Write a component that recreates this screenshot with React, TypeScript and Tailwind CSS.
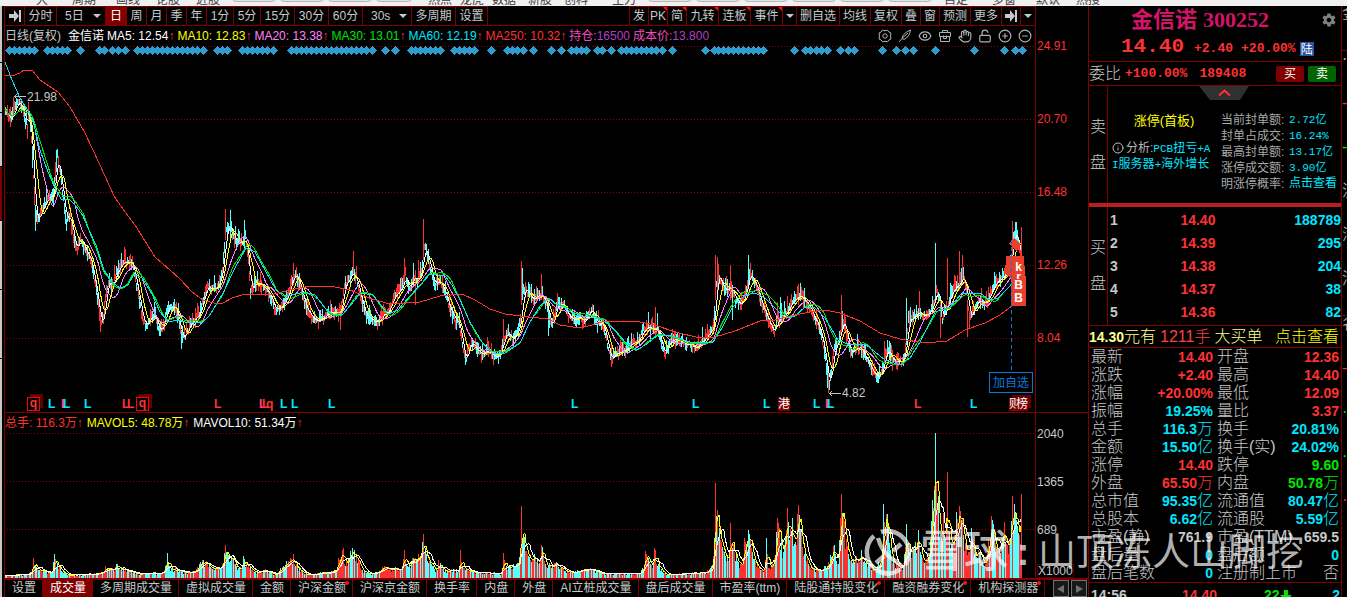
// Libraries
import type { ReactNode } from "react";
import clsx from "clsx";
import { CircleMinus, CirclePlus, Eye, Hand, Info, LockOpen } from "lucide-react";
import { IoMdSettings } from "react-icons/io";

type Point = [number, number];

interface ToolItem {
  label: ReactNode;
  width: string;
  active?: boolean;
  hot?: boolean;
}

interface Marker {
  text: string;
  x: number;
  tone: string;
}

interface StatCell {
  label: string;
  value: string;
  unit?: string;
  tone: string;
}

// Plot geometry, shared by both charts
const PLOT_LEFT = 5;
const PLOT_WIDTH = 1030;
const FIRST_BAR = 5;
const LAST_BAR = 1021;
const VOLUME_BASE = 578;

const RED = "text-[#ff3232]";
const CYAN = "text-[#00e6ff]";
const GREEN = "text-[#00e600]";
const GRAY = "text-[#c8c8c8]";

const CLOSES: Point[] = [
  [5, 110], [10, 121], [15, 109], [18, 102], [22, 108], [26, 124], [29, 115], [31, 140], [33, 178],
  [35, 220], [38, 220], [42, 208], [46, 202], [50, 195], [53, 197], [55, 172], [57, 157], [60, 174],
  [62, 192], [66, 222], [70, 215], [73, 240], [77, 250], [80, 238], [84, 247], [88, 255], [91, 262],
  [94, 280], [98, 305], [100, 322], [103, 318], [106, 290], [109, 280], [112, 288], [116, 272],
  [120, 268], [124, 262], [132, 263], [136, 285], [140, 305], [143, 322], [147, 325], [151, 317],
  [155, 315], [159, 332], [163, 325], [167, 308], [175, 308], [178, 318], [181, 338], [185, 335],
  [190, 325], [195, 317], [199, 315], [203, 300], [207, 285], [211, 290], [216, 288], [220, 280],
  [223, 262], [225, 235], [228, 226], [231, 230], [234, 240], [238, 243], [242, 245], [245, 237],
  [248, 262], [250, 290], [255, 285], [260, 283], [265, 288], [270, 295], [275, 310], [280, 307],
  [285, 300], [288, 295], [292, 278], [296, 275], [300, 287], [304, 303], [308, 312], [312, 317],
  [318, 322], [324, 317], [330, 313], [340, 312], [344, 287], [348, 280], [352, 272], [356, 278],
  [360, 298], [364, 312], [368, 318], [373, 320], [378, 322], [382, 315], [388, 313], [392, 300],
  [395, 294], [398, 293], [402, 287], [405, 276], [409, 290], [413, 279], [418, 279], [421, 272],
  [424, 246], [427, 253], [430, 270], [434, 285], [438, 280], [442, 285], [446, 298], [450, 310],
  [455, 320], [459, 325], [462, 345], [465, 362], [468, 348], [472, 342], [478, 352], [484, 354],
  [488, 350], [494, 357], [500, 355], [503, 340], [507, 332], [512, 340], [518, 330], [521, 315],
  [523, 288], [527, 292], [532, 300], [537, 296], [542, 294], [546, 305], [549, 320], [552, 325],
  [556, 306], [560, 303], [564, 305], [568, 317], [574, 320], [580, 315], [583, 325], [587, 315],
  [592, 310], [597, 325], [602, 322], [606, 340], [611, 360], [615, 353], [625, 350], [632, 343],
  [638, 341], [643, 331], [648, 326], [653, 331], [657, 329], [661, 345], [665, 353], [670, 342],
  [676, 338], [682, 343], [690, 345], [695, 347], [702, 342], [708, 333], [713, 328], [715, 300],
  [717, 274], [720, 280], [725, 290], [730, 286], [735, 300], [740, 305], [745, 295], [748, 280],
  [750, 273], [755, 285], [760, 300], [765, 315], [770, 325], [774, 332], [777, 318], [782, 318],
  [787, 312], [792, 300], [797, 298], [800, 295], [804, 300], [808, 305], [812, 315], [816, 322],
  [820, 333], [824, 350], [827, 375], [829, 385], [831, 370], [834, 348], [838, 342], [841, 326],
  [844, 322], [847, 340], [850, 354], [855, 350], [860, 348], [866, 358], [872, 372], [878, 377],
  [882, 372], [884, 358], [888, 350], [893, 362], [903, 361], [906, 340], [908, 320], [913, 318],
  [918, 311], [924, 316], [930, 312], [934, 300], [936, 290], [939, 300], [942, 320], [946, 310],
  [950, 295], [955, 287], [960, 281], [963, 276], [966, 290], [969, 318], [973, 312], [978, 300],
  [983, 305], [988, 300], [993, 287], [998, 280], [1003, 277], [1008, 272], [1011, 260], [1013, 235],
  [1016, 235], [1019, 250], [1021, 258],
];

// x, high, low, rising
const WICKS: [number, number, number, boolean][] = [
  [13, 97, 115, true], [28, 102, 120, true], [27, 124, 139, true], [56, 150, 172, false], [35, 205, 231, false],
  [100, 312, 332, true], [181, 330, 349, false], [225, 209, 240, true], [230, 210, 240, false],
  [244, 220, 248, false], [293, 263, 285, true], [340, 305, 330, true], [353, 251, 275, true],
  [404, 258, 282, true], [413, 263, 285, false], [415, 270, 305, true], [418, 260, 284, true],
  [423, 219, 260, true], [465, 350, 365, false], [503, 319, 345, true], [521, 261, 305, true],
  [522, 268, 300, false], [541, 274, 300, true], [548, 300, 336, false], [557, 293, 312, true],
  [611, 345, 367, true], [655, 307, 336, true], [715, 255, 300, true], [717, 257, 290, true],
  [730, 265, 300, true], [732, 285, 320, false], [748, 255, 285, false], [780, 297, 322, false],
  [798, 284, 305, true], [827, 360, 388, false], [828, 370, 393, true], [841, 295, 335, true],
  [884, 341, 362, true], [906, 298, 345, false], [919, 291, 315, true], [935, 243, 300, false],
  [940, 300, 338, true], [947, 258, 300, true], [959, 251, 290, true], [962, 255, 285, true],
  [967, 300, 337, true], [1012, 221, 260, true], [1015, 222, 245, false], [1016, 222, 252, false],
  [1021, 227, 262, true],
];

const MA60: Point[] = [
  [5, 62], [12, 80], [20, 98], [30, 114], [34, 125], [40, 150], [48, 172], [55, 188], [61, 199],
  [69, 199], [76, 206], [83, 216], [88, 228], [96, 245], [104, 270], [112, 282], [120, 288],
  [128, 285], [134, 274], [142, 278], [152, 294], [160, 312], [168, 322], [178, 320], [185, 322],
  [203, 322], [210, 315], [222, 295], [235, 268], [246, 248], [255, 252], [265, 270], [276, 290],
  [286, 296], [305, 292], [315, 295], [325, 308], [333, 315], [343, 314], [355, 300], [360, 293],
  [373, 295], [388, 314], [398, 310], [410, 296], [422, 283], [430, 274], [445, 276], [452, 285],
  [460, 300], [470, 322], [482, 342], [492, 353], [505, 353], [520, 343], [530, 322], [540, 306],
  [549, 298], [556, 304], [565, 308], [575, 315], [590, 317], [603, 320], [615, 330], [625, 342],
  [637, 350], [648, 343], [658, 335], [672, 336], [690, 342], [705, 343], [713, 342], [722, 328],
  [732, 308], [745, 295], [755, 293], [765, 298], [775, 308], [785, 318], [795, 316], [805, 307],
  [815, 308], [825, 318], [838, 340], [850, 345], [865, 344], [875, 352], [885, 360], [900, 365],
  [910, 358], [920, 342], [935, 312], [950, 307], [962, 293], [980, 293], [990, 300], [998, 298],
  [1011, 285],
];

const MA250: Point[] = [
  [5, 75], [12, 76], [20, 73], [24, 70], [32, 70], [40, 80], [58, 92], [70, 107], [85, 133],
  [100, 165], [114, 196], [125, 212], [135, 225], [155, 257], [170, 270], [180, 279], [192, 292],
  [203, 300], [214, 303], [223, 303], [232, 298], [245, 294], [270, 295], [290, 290], [310, 286],
  [330, 286], [350, 290], [372, 299], [390, 304], [420, 302], [440, 296], [462, 294], [475, 300],
  [490, 309], [505, 314], [520, 316], [548, 319], [560, 325], [580, 328], [592, 325], [605, 321],
  [640, 322], [655, 325], [675, 332], [700, 338], [715, 337], [735, 331], [760, 321], [775, 320],
  [790, 316], [810, 312], [825, 310], [840, 313], [860, 321], [880, 333], [900, 339], [925, 343],
  [947, 341], [965, 330], [985, 323], [1000, 315], [1012, 306],
];

const VOLUMES: Point[] = [
  [5, 3], [25, 4], [32, 7], [33, 20], [35, 12], [40, 8], [52, 5], [54, 24], [57, 15], [62, 6], [70, 3],
  [100, 5], [105, 12], [115, 11], [116, 14], [125, 9], [140, 4], [163, 6], [165, 12], [167, 25],
  [169, 12], [185, 6], [195, 7], [202, 18], [207, 16], [215, 10], [222, 14], [225, 33], [227, 24],
  [232, 20], [238, 10], [242, 12], [243, 22], [248, 12], [255, 6], [265, 9], [275, 4], [283, 12],
  [290, 20], [293, 24], [297, 11], [305, 4], [325, 6], [336, 8], [338, 20], [343, 30], [344, 14], [348, 20],
  [352, 30], [356, 24], [362, 8], [372, 4], [384, 12], [392, 9], [402, 12], [404, 28], [407, 12], [413, 20],
  [418, 24], [421, 22], [423, 44], [426, 24], [432, 12], [437, 8], [438, 18], [445, 8], [459, 9],
  [460, 28], [463, 10], [480, 6], [501, 5], [503, 25], [506, 12], [518, 14], [520, 26], [521, 72],
  [523, 44], [528, 22], [533, 18], [534, 24], [540, 18], [541, 33], [545, 14], [556, 16], [565, 7],
  [590, 10], [600, 5], [640, 5], [644, 14], [645, 27], [650, 14], [653, 14], [654, 30], [658, 14], [665, 4],
  [704, 6], [710, 10], [713, 22], [714, 40], [715, 95], [717, 68], [720, 38], [724, 26], [729, 24],
  [730, 55], [733, 34], [738, 16], [743, 16], [744, 40], [748, 48], [752, 26], [757, 13], [764, 8],
  [766, 40], [768, 10], [774, 20], [777, 60], [779, 50], [783, 26], [787, 70], [789, 38], [792, 60],
  [795, 36], [798, 73], [800, 48], [805, 26], [810, 10], [822, 8], [828, 16], [834, 33], [838, 14],
  [840, 60], [841, 84], [843, 60], [848, 24], [855, 20], [861, 28], [866, 16], [875, 9], [882, 22],
  [883, 74], [884, 56], [887, 64], [890, 28], [896, 14], [903, 12], [906, 54], [908, 30], [913, 30],
  [918, 48], [922, 20], [929, 18], [932, 78], [933, 70], [934, 92], [935, 145], [936, 96], [938, 82], [941, 40],
  [943, 65], [946, 48], [947, 106], [949, 46], [953, 36], [956, 66], [959, 72], [962, 60], [965, 35], [969, 26],
  [971, 50], [974, 24], [980, 28], [985, 14], [991, 62], [993, 54], [997, 30], [1004, 56], [1006, 34],
  [1010, 40], [1012, 82], [1014, 74], [1017, 52], [1020, 34], [1021, 84],
];

// Signal diamonds above the candles, as runs of centres
const SIGNAL_RUNS: Point[] = [
  [9, 34], [47, 67], [80, 80], [99, 104], [112, 118], [125, 125], [137, 203], [217, 227], [242, 273],
  [291, 372], [385, 385], [395, 395], [411, 440], [454, 474], [491, 491], [507, 523], [533, 533],
  [551, 551], [561, 561], [571, 586], [597, 602], [611, 611], [621, 626], [631, 662], [672, 672],
  [705, 705], [714, 763], [794, 794], [805, 827], [840, 840], [848, 848], [854, 854], [882, 882],
  [896, 896], [905, 905], [913, 913], [935, 935], [974, 974], [1004, 1004], [1015, 1015], [1022, 1022],
];

function seeded(seed: number) {
  let s = seed;
  return () => {
    s = (s * 16807) % 2147483647;
    return s / 2147483647;
  };
}

function interpolate(points: Point[], x: number) {
  const next = points.findIndex((p) => p[0] >= x);
  if (next <= 0) return points[0][1];
  const [x0, y0] = points[next - 1];
  const [x1, y1] = points[next];
  return y0 + ((y1 - y0) * (x - x0)) / (x1 - x0);
}

function average(values: number[], size: number) {
  return values.map((_, i) => {
    const part = values.slice(Math.max(0, i - size + 1), i + 1);
    return part.reduce((a, b) => a + b, 0) / part.length;
  });
}

function toLine(values: number[]) {
  return values.map((v, i) => `${FIRST_BAR + i},${v.toFixed(1)}`).join(" ");
}

function buildCharts() {
  const random = seeded(300252);
  const closes: number[] = [];
  const volumes: number[] = [];
  const candles = { up: "", down: "" };
  const bars = { up: "", down: "" };

  for (let x = FIRST_BAR; x <= LAST_BAR; x++) {
    const close = interpolate(CLOSES, x) + (random() - 0.5) * 4;
    const wick = WICKS.find((w) => w[0] === x);
    const key = (wick ? wick[3] : random() > 0.5) ? "up" : "down";
    const high = wick ? wick[1] : close - 2 - random() * random() * 14;
    const low = wick ? wick[2] : close + 2 + random() * random() * 9;
    candles[key] += `M${x + 0.5} ${high.toFixed(0)}V${low.toFixed(0)}`;
    closes.push(close);

    const exact = VOLUMES.some((v) => v[0] === x);
    const volume = interpolate(VOLUMES, x) * (exact ? 1 : 0.6 + random() * 0.5);
    bars[key] += `M${x + 0.5} ${VOLUME_BASE}V${(VOLUME_BASE - volume).toFixed(0)}`;
    volumes.push(volume);
  }

  return {
    candles,
    bars,
    ma: [5, 10, 20, 30].map((n) => toLine(average(closes, n))),
    mavol: [5, 10].map((n) => toLine(average(volumes, n).map((v) => VOLUME_BASE - v))),
  };
}

const charts = buildCharts();

const LEFT_TOOLS: ToolItem[] = [
  { label: <ArrowToBar />, width: "w-5" },
  { label: "分时", width: "w-8" },
  { label: <>5日<Caret /></>, width: "w-[49px]" },
  { label: "日", width: "w-[21px]", active: true },
  { label: "周", width: "w-5" },
  { label: "月", width: "w-5" },
  { label: "季", width: "w-5" },
  { label: "年", width: "w-5" },
  { label: "1分", width: "w-[27px]" },
  { label: "5分", width: "w-[27px]" },
  { label: "15分", width: "w-[34px]" },
  { label: "30分", width: "w-[34px]" },
  { label: "60分", width: "w-[34px]" },
  { label: <>30s<Caret /></>, width: "w-[49px]" },
  { label: "多周期", width: "w-11" },
  { label: "设置", width: "w-8" },
];

const RIGHT_TOOLS: ToolItem[] = [
  { label: "发", width: "w-[19px]" },
  { label: "PK", width: "w-[19px]", hot: true },
  { label: "简", width: "w-[19px]", hot: true },
  { label: "九转", width: "w-8", hot: true },
  { label: "连板", width: "w-8", hot: true },
  { label: "事件", width: "w-8", hot: true },
  { label: <Caret />, width: "w-[14px]" },
  { label: "删自选", width: "w-[43px]" },
  { label: "均线", width: "w-[31px]" },
  { label: "复权", width: "w-[31px]" },
  { label: "叠", width: "w-[19px]" },
  { label: "窗", width: "w-[19px]" },
  { label: "预测", width: "w-[31px]" },
  { label: "更多", width: "w-[31px]" },
  { label: <ArrowToBar />, width: "w-[19px]" },
  { label: <Caret />, width: "w-[15px]" },
];

const AVERAGES = [
  { text: "MA5: 12.54", tone: "text-white" },
  { text: "MA10: 12.83", tone: "text-[#ffff00]" },
  { text: "MA20: 13.38", tone: "text-[#ff80ff]" },
  { text: "MA30: 13.01", tone: GREEN },
  { text: "MA60: 12.19", tone: CYAN },
  { text: "MA250: 10.32", tone: RED },
];

const MARKERS: Marker[] = [
  { text: "L", x: 48, tone: CYAN },
  { text: "L", x: 61, tone: "text-[#ff4080]" },
  { text: "L", x: 63, tone: CYAN },
  { text: "L", x: 84, tone: CYAN },
  { text: "L", x: 122, tone: RED },
  { text: "L", x: 127, tone: RED },
  { text: "L", x: 214, tone: RED },
  { text: "L", x: 259, tone: "text-[#ff4080]" },
  { text: "L", x: 262, tone: RED },
  { text: "q", x: 266, tone: RED },
  { text: "L", x: 280, tone: CYAN },
  { text: "L", x: 291, tone: CYAN },
  { text: "L", x: 328, tone: CYAN },
  { text: "L", x: 571, tone: CYAN },
  { text: "L", x: 692, tone: CYAN },
  { text: "L", x: 763, tone: CYAN },
  { text: "L", x: 813, tone: CYAN },
  { text: "L", x: 825, tone: "text-[#ff4080]" },
  { text: "L", x: 827, tone: CYAN },
  { text: "L", x: 914, tone: RED },
  { text: "L", x: 970, tone: CYAN },
];

const TABS = [
  { label: "设置" },
  { label: "成交量", active: true },
  { label: "多周期成交量" },
  { label: "虚拟成交量" },
  { label: "金额" },
  { label: "沪深金额", dot: true },
  { label: "沪深京金额" },
  { label: "换手率" },
  { label: "内盘" },
  { label: "外盘" },
  { label: "AI立桩成交量" },
  { label: "盘后成交量" },
  { label: "市盈率(ttm)" },
  { label: "陆股通持股变化", dot: true },
  { label: "融资融券变化", dot: true },
  { label: "机构探测器", dot: true },
];

const LIMIT_FACTS = [
  ["当前封单额", "2.72亿"],
  ["封单占成交", "16.24%"],
  ["最高封单额", "13.17亿"],
  ["涨停成交额", "3.90亿"],
  ["明涨停概率", "点击查看"],
];

const BIDS = [
  ["1", "14.40", "188789"],
  ["2", "14.39", "295"],
  ["3", "14.38", "204"],
  ["4", "14.37", "38"],
  ["5", "14.36", "82"],
];

const STATS: [StatCell, StatCell][] = [
  [{ label: "最新", value: "14.40", tone: RED }, { label: "开盘", value: "12.36", tone: RED }],
  [{ label: "涨跌", value: "+2.40", tone: RED }, { label: "最高", value: "14.40", tone: RED }],
  [{ label: "涨幅", value: "+20.00%", tone: RED }, { label: "最低", value: "12.09", tone: RED }],
  [{ label: "振幅", value: "19.25%", tone: CYAN }, { label: "量比", value: "3.37", tone: RED }],
  [{ label: "总手", value: "116.3", unit: "万", tone: CYAN }, { label: "换手", value: "20.81%", tone: CYAN }],
  [{ label: "金额", value: "15.50", unit: "亿", tone: CYAN }, { label: "换手(实)", value: "24.02%", tone: CYAN }],
  [{ label: "涨停", value: "14.40", tone: RED }, { label: "跌停", value: "9.60", tone: GREEN }],
  [{ label: "外盘", value: "65.50", unit: "万", tone: RED }, { label: "内盘", value: "50.78", unit: "万", tone: GREEN }],
  [{ label: "总市值", value: "95.35", unit: "亿", tone: CYAN }, { label: "流通值", value: "80.47", unit: "亿", tone: CYAN }],
  [{ label: "总股本", value: "6.62", unit: "亿", tone: CYAN }, { label: "流通股", value: "5.59", unit: "亿", tone: CYAN }],
  [{ label: "市盈(静)", value: "761.9", tone: GRAY }, { label: "市盈(TTM)", value: "659.5", tone: GRAY }],
  [{ label: "盘后量", value: "0", tone: CYAN }, { label: "盘后额", value: "0", tone: CYAN }],
  [{ label: "盘后笔数", value: "0", tone: CYAN }, { label: "注册制上市", value: "", unit: "否", tone: GRAY }],
];

// Bottom edge of the window's ribbon menu
const RIBBON: { text?: string; box: string }[] = [
  { text: "大", box: "ml-9 w-9" },
  { text: "周期", box: "w-11" },
  { text: "画线", box: "w-10" },
  { text: "论股", box: "w-10" },
  { text: "近股", box: "w-9" },
  { box: "w-11" },
  { box: "ml-1 w-11" },
  { box: "ml-1 w-11" },
  { box: "ml-1 w-9" },
  { text: "热点", box: "ml-4 w-8" },
  { text: "龙虎", box: "w-8" },
  { text: "数据", box: "w-9" },
  { text: "新股", box: "w-9" },
  { text: "创科", box: "w-12" },
  { text: "主力", box: "w-9" },
  { box: "w-11" },
  { box: "ml-1 w-11" },
  { box: "ml-1 w-11" },
  { box: "ml-1 w-11" },
  { box: "ml-1 w-11" },
  { box: "ml-1 w-11" },
  { text: "自定", box: "ml-3 w-12" },
  { text: "多窗", box: "w-11" },
  { text: "默认", box: "w-10" },
  { text: "热搜", box: "w-10" },
];

function toPercent(x: number) {
  return `${((x - PLOT_LEFT) / PLOT_WIDTH) * 100}%`;
}

function Caret() {
  return (
    <svg className="h-1 w-2 shrink-0" viewBox="0 0 8 4" fill="#c8c8c8">
      <path d="M0 0h8L4 4z" />
    </svg>
  );
}

function ArrowToBar() {
  return (
    <svg className="h-3 w-3 shrink-0" viewBox="0 0 12 12" fill="#c8c8c8">
      <path d="M0 4h5V0l5 6-5 6V8H0zM10 0h2v12h-2z" />
    </svg>
  );
}

function ToolButton({ label, width, active, hot }: ToolItem) {
  return (
    <button
      className={clsx(
        "relative flex h-full shrink-0 items-center border-r border-[#800000] whitespace-nowrap",
        width,
        width === "w-[49px]" ? "justify-between pr-1 pl-2" : "justify-center",
        active ? "bg-[#800000] text-white" : GRAY,
      )}
    >
      {label}
      {hot && (
        <svg className="absolute top-0 right-0 h-1 w-1" viewBox="0 0 4 4" fill="#ff1010">
          <path d="M0 0h4v4z" />
        </svg>
      )}
    </button>
  );
}

function Ribbon() {
  return (
    <div className="flex h-[6px] shrink-0 items-end overflow-hidden bg-[#f0f0f0] text-xs leading-3 text-[#404040]">
      {RIBBON.map((item, i) => (
        <span
          key={i}
          className={clsx(
            "shrink-0",
            item.box,
            !item.text && "mb-1 h-3 rounded-sm border border-[#b8b8b8] bg-[#e4e4e4]",
          )}
        >
          {item.text}
        </span>
      ))}
    </div>
  );
}

function Toolbar() {
  return (
    <div className="flex h-5 shrink-0 justify-between border-b border-[#800000] text-xs">
      <div className="flex border-t border-[#800000]">
        {LEFT_TOOLS.map((item, i) => <ToolButton key={i} {...item} />)}
      </div>
      <div className="flex border-t border-l border-[#800000]">
        {RIGHT_TOOLS.map((item, i) => <ToolButton key={i} {...item} />)}
      </div>
    </div>
  );
}

function ChartTools() {
  const icon = "h-[14px] w-[14px]";

  return (
    <div className="ml-auto flex items-center gap-[6px] pr-[3px] text-[#b0b0b0]">
      <button aria-label="设置">
        <svg className={icon} viewBox="0 0 14 14" fill="none" stroke="currentColor">
          <path d="M4.5 1.2Q7 2.2 9.500 1.200Q10.500 3.500 13 4Q12 7 13 10Q10.500 10.500 9.500 12.800Q7 11.800 4.500 12.800Q3.500 10.500 1 10Q2 7 1 4Q3.500 3.500 4.500 1.200Z" />
          <circle cx="7" cy="7" r="2.200" />
        </svg>
      </button>
      <button aria-label="画线">
        <svg className={icon} viewBox="0 0 14 14" fill="none" stroke="currentColor">
          <path d="M1 13L4 9.500M4 9.500Q5 4 12.500 1Q11.500 8 6 10.500L4 9.500L10 4" />
        </svg>
      </button>
      <button aria-label="显示"><Eye className={icon} strokeWidth={2} /></button>
      <button aria-label="工具箱">
        <svg className={icon} viewBox="0 0 14 14" fill="none" stroke="currentColor">
          <path d="M4.500 3.500V1.500H9.500V3.500M1.500 3.500H12.500V7.500H1.500zM2.500 7.500V12.500H11.500V7.500M5.500 6.500V9.500H8.500V6.500" />
        </svg>
      </button>
      <button aria-label="拖动"><Hand className={icon} strokeWidth={2} /></button>
      <button aria-label="解锁"><LockOpen className={icon} strokeWidth={2} /></button>
      <button aria-label="放大"><CirclePlus className={icon} strokeWidth={2} /></button>
      <button aria-label="缩小"><CircleMinus className={icon} strokeWidth={2} /></button>
    </div>
  );
}

function GridLines({ rows }: { rows: number[] }) {
  return (
    <g stroke="#900000" strokeDasharray="1 2">
      {rows.map((y) => <path key={y} d={`M7 ${y + 0.5}H1035`} />)}
    </g>
  );
}

function PriceChart() {
  const signals = SIGNAL_RUNS.flatMap(([from, to]) => {
    const count = Math.round((to - from) / 5);
    return Array.from({ length: count + 1 }, (_, i) => from + (count ? ((to - from) / count) * i : 0));
  });

  return (
    <div className="relative h-[366px]">
      <svg
        className="block h-full w-full"
        viewBox="5 46 1030 366"
        preserveAspectRatio="none"
        fill="none"
        shapeRendering="crispEdges"
      >
        <GridLines rows={[46, 119, 192, 265, 338]} />
        <path fill="#2e9ccc" d={signals.map((x) => `M${x - 4.5} 50.500l4.500 -4.500l4.500 4.500l-4.500 4.500z`).join("")} />
        <path stroke="#ff3232" d={charts.candles.up} />
        <path stroke="#54ffff" d={charts.candles.down} />
        <polyline stroke="#fff" points={charts.ma[0]} />
        <polyline stroke="#ff0" points={charts.ma[1]} />
        <polyline stroke="#ff80ff" points={charts.ma[2]} />
        <polyline stroke="#00e600" points={charts.ma[3]} />
        <polyline stroke="#00e6ff" points={MA60.join(" ")} />
        <polyline stroke="#ff3232" points={MA250.join(" ")} />
        <path stroke="#c0c0c0" d="M14 96.500H26M14 96.500l3 -2M14 96.500l3 2M829 393.500H841M829 393.500l3 -2M829 393.500l3 2" />
        <path fill="#e8402a" d="M1009 243l5 -5l6 6v5l-4 2zM1006 256h18l1 20h1v30h-15v-28l-6 -4z" />
        <path stroke="#0b78d8" strokeDasharray="4 3" d="M1011.500 240V372" />
      </svg>

      <span className={clsx("absolute top-[43px] text-xs leading-4", GRAY)} style={{ left: toPercent(27) }}>21.98</span>
      <span className={clsx("absolute top-[339px] text-xs leading-4", GRAY)} style={{ left: toPercent(842) }}>4.82</span>

      <div
        className="absolute top-[215px] w-[15px] text-center text-xs leading-[13px] font-bold text-white"
        style={{ left: toPercent(1011) }}
      >
        <div className="h-[10px] overflow-hidden">k</div>
        <div className="mt-[2px] h-[6px] overflow-hidden leading-[9px]">r</div>
        <div>B</div>
        <div>B</div>
      </div>

      <button className="absolute top-[326px] right-[2px] h-[21px] border border-[#0b78d8] bg-black px-[3px] text-xs text-[#0b78d8]">
        加自选
      </button>

      {MARKERS.map((m) => (
        <span
          key={m.x}
          className={clsx("absolute bottom-0 text-xs leading-4 font-bold", m.tone)}
          style={{ left: toPercent(m.x) }}
        >
          {m.text}
        </span>
      ))}
      {[27, 136].map((x) => (
        <span
          key={x}
          className="absolute bottom-px h-[14px] w-[13px] border border-[#ff0000] text-center text-xs leading-[11px] font-bold text-[#ff3232] shadow-[3px_-3px_0_#600000]"
          style={{ left: toPercent(x) }}
        >
          q
        </span>
      ))}
      <span
        className="absolute bottom-px h-[13px] bg-[#800000] text-xs leading-[13px] text-white"
        style={{ left: toPercent(778) }}
      >
        港
      </span>
      <span
        className="absolute bottom-px flex h-[13px] bg-[#800000] text-xs leading-[13px] text-white shadow-[3px_-3px_0_#600000]"
        style={{ left: toPercent(1009) }}
      >
        <span className="w-[7px] overflow-hidden">则</span>榜
      </span>
    </div>
  );
}

function PricePane() {
  return (
    <section className="flex border-b border-[#800000]">
      <div className="min-w-0 flex-1 border-r border-[#800000]">
        <div className="flex h-5 items-center gap-[3px] text-xs whitespace-nowrap">
          <span className={GRAY}>日线(复权)</span>
          <span className="ml-1 text-white">金信诺</span>
          {AVERAGES.map((a) => (
            <span key={a.text} className={a.tone}>
              {a.text}<span className={RED}>↑</span>
            </span>
          ))}
          <span className="text-[#f04cc0]">持仓:<span className="text-[#b040c0]">16500</span></span>
          <span className="text-[#f04cc0]">成本价:<span className="text-[#b040c0]">13.800</span></span>
          <ChartTools />
        </div>
        <PriceChart />
      </div>
      <div className="w-[52px] shrink-0 pt-3 pl-px text-xs leading-4 text-[#ff3232]">
        {["24.91", "20.70", "16.48", "12.26", "8.04"].map((p) => (
          <div key={p} className="h-[73px]">{p}</div>
        ))}
      </div>
    </section>
  );
}

function VolumePane() {
  return (
    <section className="flex">
      <div className="min-w-0 flex-1 border-r border-[#800000]">
        <div className="flex h-5 items-center gap-1 text-xs whitespace-nowrap">
          <span className={RED}>总手: 116.3万↑</span>
          <span className="text-[#ffff00]">MAVOL5: 48.78万<span className={RED}>↑</span></span>
          <span className="text-white">MAVOL10: 51.34万<span className={RED}>↑</span></span>
        </div>
        <svg
          className="block h-[145px] w-full"
          viewBox="5 433 1030 145"
          preserveAspectRatio="none"
          fill="none"
          shapeRendering="crispEdges"
        >
          <GridLines rows={[433, 481, 529]} />
          <path stroke="#ff3232" d={charts.bars.up} />
          <path stroke="#54ffff" d={charts.bars.down} />
          <polyline stroke="#ff0" points={charts.mavol[0]} />
          <polyline stroke="#fff" points={charts.mavol[1]} />
        </svg>
      </div>
      <div className={clsx("flex w-[52px] shrink-0 flex-col pt-[13px] pl-px text-xs leading-4", GRAY)}>
        <div className="h-12">2040</div>
        <div className="h-12">1365</div>
        <div>689</div>
        <div className="mt-auto self-start border border-[#500000] leading-3">X1000</div>
      </div>
    </section>
  );
}

function IndicatorTabs() {
  return (
    <nav className="flex h-[19px] shrink-0 border-t-2 border-[#800000] text-xs">
      {TABS.map((tab) => (
        <button
          key={tab.label}
          className={clsx(
            "relative shrink-0 border-r border-[#800000] pr-[6px] pl-[7px] leading-[17px] whitespace-nowrap",
            tab.active ? "bg-[#800000] text-white" : GRAY,
          )}
        >
          {tab.label}
          {tab.dot && <span className="absolute top-px right-[3px] h-1 w-1 rounded-full bg-[#ff1010]" />}
        </button>
      ))}
      <div className="ml-auto flex shrink-0 gap-[2px] pr-px">
        <button aria-label="向左" className="flex w-4 items-center justify-center border border-[#707070] bg-[#181818]">
          <svg className="h-2 w-2" viewBox="0 0 8 8" fill="#707070"><path d="M7 0v8L0 4z" /></svg>
        </button>
        <button aria-label="向右" className="flex w-4 items-center justify-center border border-[#707070] bg-[#181818]">
          <svg className="h-2 w-2" viewBox="0 0 8 8" fill="#707070"><path d="M1 0v8l7-4z" /></svg>
        </button>
      </div>
    </nav>
  );
}

function SideLabel({ first, second }: { first: string; second: string }) {
  return (
    <div className={clsx("flex w-[19px] shrink-0 flex-col items-center justify-center gap-5 border-r border-[#800000] text-base leading-4 font-light", GRAY)}>
      <span>{first}</span>
      <span>{second}</span>
    </div>
  );
}

function QuoteHeader() {
  return (
    <header className="shrink-0 border-b border-[#800000]">
      <div className="flex h-[27px] items-center text-[22px] leading-6 font-bold text-[#d4146a]">
        <h1 className="ml-[42px] flex gap-[6px]">
          金信诺
          <span className="font-['Liberation_Serif']">300252</span>
        </h1>
        <button aria-label="设置" className="mr-1 ml-auto text-[#808080]">
          <IoMdSettings className="h-4 w-4" />
        </button>
      </div>
      <div className={clsx("flex h-7 items-center pl-8 font-['Liberation_Mono'] text-[13px] font-bold", RED)}>
        <span className="text-[21px] leading-7">14.40</span>
        <span className="ml-[10px] pt-1">+2.40</span>
        <span className="ml-2 pt-1">+20.00%</span>
        <span className="mt-1 ml-1 bg-[#2b55a0] px-px font-['Noto_Sans_CJK_SC'] text-xs leading-[14px] font-normal text-white">陆</span>
      </div>
    </header>
  );
}

function CommitteeRow() {
  return (
    <div className="flex h-6 shrink-0 items-center border-b border-[#800000]">
      <span className={clsx("text-base leading-5 font-light", GRAY)}>委比</span>
      <span className={clsx("ml-1 flex gap-3 font-['Liberation_Mono'] text-[13px] font-bold", RED)}>
        <span>+100.00%</span>
        <span>189408</span>
      </span>
      <div className="mr-[5px] ml-auto flex gap-1 text-xs leading-4 text-white">
        <button className="w-7 rounded-xs bg-[#800000]">买</button>
        <button className="w-7 rounded-xs bg-[#006400]">卖</button>
      </div>
    </div>
  );
}

function SellSide() {
  return (
    <section className="relative flex h-[121px] shrink-0 border-b-4 border-[#b82020]">
      <SideLabel first="卖" second="盘" />
      <button aria-label="收起" className="absolute top-0 left-[110px]">
        <svg className="block h-[14px] w-[50px]" viewBox="0 0 50 14" fill="none">
          <path d="M0 0h50L41 14H11z" fill="#303030" />
          <path d="M20 9.500l5.500-5 5.500 5" stroke="#ff3232" strokeWidth="2" />
        </svg>
      </button>
      <div className="flex min-w-0 flex-1 justify-between pr-1 text-xs leading-4">
        <div className="w-[108px] pt-[27px] pl-1 whitespace-nowrap">
          <div className="text-center text-[13px] text-[#ffff00]">涨停(首板)</div>
          <p className="mt-[11px] font-['Liberation_Mono','Noto_Sans_CJK_SC'] text-[#00e6ff]">
            <Info className="mr-[2px] inline h-3 w-3 align-[-2px] text-[#c0c0c0]" />
            <span className="font-['Liberation_Sans','Noto_Sans_CJK_SC'] text-[#b8b8b8]">分析:</span>
            <span className="text-[11px]">PCB</span>扭亏<span className="text-[11px]">+A</span>
            <br />
            <span className="text-[11px]">I</span>服务器<span className="text-[11px]">+</span>海外增长
          </p>
        </div>
        <dl className="pt-[26px]">
          {LIMIT_FACTS.map(([label, value]) => (
            <div key={label} className="flex">
              <dt className="w-[68px] text-[#a8a8a8]">{label}:</dt>
              <dd className="w-12 font-['Liberation_Mono','Noto_Sans_CJK_SC'] text-[11px] whitespace-nowrap text-[#00e6ff]">
                {value === "点击查看" ? <a href="#odds" className="text-xs">{value}</a> : value}
              </dd>
            </div>
          ))}
        </dl>
      </div>
    </section>
  );
}

function BuySide() {
  return (
    <section className="flex h-[119px] shrink-0 border-b border-[#800000]">
      <SideLabel first="买" second="盘" />
      <table className="mt-px h-[116px] flex-1 text-[14px] leading-4 font-bold">
        <tbody>
          {BIDS.map(([level, price, amount]) => (
            <tr key={level}>
              <td className={clsx("pl-[2px]", GRAY)}>{level}</td>
              <td className={clsx("w-[98px] text-right", RED)}>{price}</td>
              <td className={clsx("w-[126px] text-right", CYAN)}>{amount}</td>
            </tr>
          ))}
        </tbody>
      </table>
    </section>
  );
}

function BigOrderNotice() {
  return (
    <div className="flex h-[22px] shrink-0 items-center border-b border-[#800000] text-base leading-5 font-light whitespace-nowrap text-[#ffff90]">
      <span><span className="text-[14px] font-bold">14.30</span>元有</span>
      <span className="ml-1 text-[#ff4040]">1211手</span>
      <span className="ml-1">大买单</span>
      <a href="#orders" className="mr-[2px] ml-auto text-[#ffff00]">点击查看</a>
    </div>
  );
}

function StatPair({ label, value, unit, tone }: StatCell) {
  return (
    <>
      <th scope="row" className={clsx("w-1/2 text-left text-base leading-[18px] font-light", GRAY)}>{label}</th>
      <td className={clsx("w-1/2 text-right text-[14px] leading-[18px] font-bold", tone)}>
        {value}
        {unit && <span className="text-base leading-[18px] font-light">{unit}</span>}
      </td>
    </>
  );
}

function QuotePanel() {
  return (
    <aside className="flex w-[254px] shrink-0 flex-col border-x border-[#800000]">
      <QuoteHeader />
      <CommitteeRow />
      <SellSide />
      <BuySide />
      <BigOrderNotice />
      <div className="flex shrink-0 gap-1 border-b border-[#800000] px-[2px]">
        {[0, 1].map((side) => (
          <table key={side} className="w-[122px] flex-1 table-fixed border-collapse whitespace-nowrap">
            <tbody>
              {STATS.map((row) => (
                <tr key={row[side].label} className="h-[18px]">
                  <StatPair {...row[side]} />
                </tr>
              ))}
            </tbody>
          </table>
        ))}
      </div>
      <div className="flex shrink-0 justify-between pr-px pl-[2px] text-[14px] leading-6 font-bold">
        <span className={clsx("w-[91px]", GRAY)}>14:56</span>
        <span className={clsx("flex-1", RED)}>14.40</span>
        <span className={clsx("flex w-14 items-center", GREEN)}>
          22
          <svg className="h-3 w-3" viewBox="0 0 12 12" fill="currentColor"><path d="M4 1h4v5h4l-6 6-6-6h4z" /></svg>
        </span>
        <span className={clsx("w-5 text-right", CYAN)}>2</span>
      </div>
    </aside>
  );
}

// Hard left edge of the neighbouring list, mostly out of view
function NextPanelEdge() {
  return (
    <div className={clsx("flex w-[5px] shrink-0 flex-col gap-7 overflow-hidden text-base leading-4 font-light", GRAY)}>
      <span>金</span>
      <span className="border-t border-[#800000]">·</span>
      <span className={RED}>-</span>
      <span className={GREEN}>-</span>
      <span>流</span>
      <span>汽</span>
      <span>泡</span>
      <span className="border-t border-[#800000]">名</span>
      <span className={RED}>-</span>
      <span className={GREEN}>·</span>
      <span className={GREEN}>·</span>
      <span className={RED}>·</span>
    </div>
  );
}

function Watermark() {
  return (
    <div className="pointer-events-none absolute right-[43px] bottom-[17px] flex items-center text-[38px] leading-[56px] whitespace-nowrap text-white/70">
      <svg className="h-12 w-12" viewBox="0 0 48 48" fill="none" stroke="currentColor" strokeWidth="4.500">
        <path d="M10 8A21.500 21.500 0 0 0 25 45.500Q32 45 36 41M17 4A21.500 21.500 0 0 1 41 37" />
        <path d="M14 10Q18 24 27 30T39 40M37 16L29 23M20 28L12 35" />
      </svg>
      <span className="ml-2 text-[44px] font-medium">雪球</span>
      <span className="w-[30px] text-center font-['Liberation_Sans'] font-bold">:</span>
      <span>山顶冻人山脚挖</span>
    </div>
  );
}

export default function App() {
  return (
    <div className="relative flex h-screen flex-col overflow-hidden bg-black font-['Liberation_Sans','Noto_Sans_CJK_SC',sans-serif]">
      <Ribbon />
      <div className="flex min-h-0 flex-1">
        <div className="mr-[2px] flex w-[2px] shrink-0 flex-col gap-px">
          <div className="h-[56px] bg-[#c8c8c8]" />
          <div className="h-[49px] bg-[#c8c8c8]" />
          <div className="h-[53px] bg-[#c8c8c8]" />
          <div className="h-[53px] bg-[#800000]" />
          <div className="h-[68px] bg-[#c8c8c8]" />
          <div className="h-[68px] bg-[#c8c8c8]" />
          <div className="flex-1 bg-[#c8c8c8]" />
        </div>
        <main className="flex min-w-0 flex-1 flex-col border-l border-[#800000]">
          <div className="mr-[52px]"><Toolbar /></div>
          <PricePane />
          <VolumePane />
          <IndicatorTabs />
        </main>
        <QuotePanel />
        <NextPanelEdge />
      </div>
      <Watermark />
    </div>
  );
}
